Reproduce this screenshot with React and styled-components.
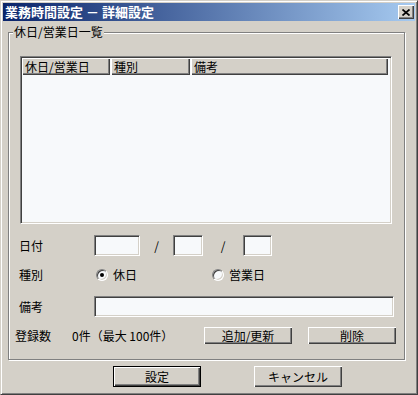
import styled, { createGlobalStyle } from "styled-components";

const GlobalStyle = createGlobalStyle`
  html, body {
    margin: 0;
    padding: 0;
    background: #d4d0c8;
  }
  body {
    font-family: "Noto Sans CJK JP", "Noto Sans", sans-serif;
    font-size: 12px;
    color: #000;
  }
`;

const raised = `
  box-shadow: inset 1px 1px #fff, inset -1px -1px #404040, inset -2px -2px #808080;
`;

const sunken = `
  border: 1px solid;
  border-color: #808080 #fff #fff #808080;
  box-shadow: inset 1px 1px #404040, inset -1px -1px #d4d0c8;
`;

const Window = styled.div`
  width: 418px;
  height: 395px;
  box-sizing: border-box;
  background: #d4d0c8;
  border: 1px solid;
  border-color: #d4d0c8 #404040 #404040 #d4d0c8;
  box-shadow: inset 1px 1px #fff, inset -1px -1px #808080;
  padding: 2px;
  display: flex;
  flex-direction: column;
`;

const TitleBar = styled.div`
  height: 18px;
  flex-shrink: 0;
  display: flex;
  align-items: center;
  justify-content: space-between;
  padding: 0 2px 0 2px;
  background: linear-gradient(to right, #0a246a, #a6caf0);
  color: #fff;
  font-weight: bold;
  font-size: 13px;
  line-height: 18px;
`;

const CloseButton = styled.div`
  width: 16px;
  height: 14px;
  background: #d4d0c8;
  ${raised}
  display: flex;
  align-items: center;
  justify-content: center;
  margin-right: -1px;
`;

const Group = styled.div`
  position: relative;
  margin: 11px 0 0 5px;
  width: 397px;
  height: 328px;
  box-sizing: border-box;
  border: 1px solid #808080;
  box-shadow: 1px 1px 0 #fff, inset 1px 1px 0 #fff;
  padding: 23px 0 0 11px;
`;

const Legend = styled.span`
  position: absolute;
  top: -8px;
  left: 4px;
  padding: 0 1px;
  background: #d4d0c8;
  line-height: 14px;
`;

const List = styled.div`
  width: 372px;
  height: 168px;
  box-sizing: border-box;
  ${sunken}
  background: #f7f9fb;
  padding: 1px;
`;

const Header = styled.div`
  display: flex;
  height: 17px;
`;

const HeaderCell = styled.div`
  width: ${(p) => (p.$w ? `${p.$w}px` : "auto")};
  flex: ${(p) => (p.$w ? "none" : 1)};
  box-sizing: border-box;
  background: #d4d0c8;
  ${raised}
  padding-left: 3px;
  line-height: 17px;
  white-space: nowrap;
  margin-right: ${(p) => (p.$w ? "1px" : "2px")};
`;

const Row = styled.div`
  display: flex;
  align-items: center;
  height: ${(p) => p.$h}px;
  margin-top: ${(p) => p.$mt}px;
  margin-left: ${(p) => p.$indent || -1}px;
`;

const Label = styled.span`
  width: ${(p) => p.$w || 75}px;
  flex-shrink: 0;
  line-height: 14px;
  white-space: nowrap;
`;

const TextBox = styled.div`
  width: ${(p) => p.$w}px;
  height: 21px;
  box-sizing: border-box;
  ${sunken}
  background: #f7f9fb;
  flex-shrink: 0;
`;

const Slash = styled.span`
  width: ${(p) => p.$w}px;
  text-align: center;
  flex-shrink: 0;
  padding-left: ${(p) => p.$pl || 0}px;
  box-sizing: border-box;
`;

const RadioOption = styled.label`
  display: flex;
  align-items: center;
  gap: 5px;
  width: ${(p) => p.$w}px;
  flex-shrink: 0;
  line-height: 14px;
`;

const RadioDot = styled.span`
  width: 12px;
  height: 12px;
  box-sizing: border-box;
  border-radius: 50%;
  border: 1px solid;
  border-color: #808080 #fff #fff #808080;
  box-shadow: inset 1px 1px #404040, inset -1px -1px #d4d0c8;
  background: #f7f9fb;
  display: flex;
  align-items: center;
  justify-content: center;
  &::after {
    content: "";
    width: 4px;
    height: 4px;
    border-radius: 50%;
    background: ${(p) => (p.$checked ? "#000" : "transparent")};
  }
`;

const Count = styled.span`
  width: ${(p) => p.$w}px;
  flex-shrink: 0;
  white-space: nowrap;
  line-height: 14px;
`;

const Button = styled.div`
  width: 88px;
  height: ${(p) => p.$h || 17}px;
  box-sizing: border-box;
  flex-shrink: 0;
  background: #d4d0c8;
  ${raised}
  display: flex;
  align-items: center;
  justify-content: center;
  line-height: 14px;
  margin-left: ${(p) => p.$ml || 0}px;
  ${(p) =>
    p.$default &&
    `
    border: 1px solid #000;
    box-shadow: inset 1px 1px #fff, inset -1px -1px #404040, inset -2px -2px #808080;
  `}
`;

const Footer = styled.div`
  display: flex;
  margin-top: 6px;
  padding-left: 110px;
  gap: 53px;
`;

const App = () => {
  return (
    <>
      <GlobalStyle />
      <Window>
        <TitleBar>
          <span>業務時間設定 － 詳細設定</span>
          <CloseButton>
            <svg width="8" height="7" viewBox="0 0 8 7">
              <path d="M0.5 0.5 L7.5 6.5 M7.5 0.5 L0.5 6.5" stroke="#000" strokeWidth="1.7" />
            </svg>
          </CloseButton>
        </TitleBar>

        <Group>
          <Legend>休日/営業日一覧</Legend>
          <List>
            <Header>
              <HeaderCell $w={88}>休日/営業日</HeaderCell>
              <HeaderCell $w={79}>種別</HeaderCell>
              <HeaderCell>備考</HeaderCell>
            </Header>
          </List>

          <Row $h={21} $mt={11}>
            <Label>日付</Label>
            <TextBox $w={46} />
            <Slash $w={33}>/</Slash>
            <TextBox $w={30} />
            <Slash $w={40}>/</Slash>
            <TextBox $w={29} />
          </Row>

          <Row $h={18} $mt={10}>
            <Label $w={77}>種別</Label>
            <RadioOption $w={116}>
              <RadioDot $checked />
              休日
            </RadioOption>
            <RadioOption $w={120}>
              <RadioDot />
              営業日
            </RadioOption>
          </Row>

          <Row $h={21} $mt={12}>
            <Label>備考</Label>
            <TextBox $w={300} />
          </Row>

          <Row $h={17} $mt={10} $indent={-5}>
            <Label $w={57}>登録数</Label>
            <Count $w={132}>0件（最大 100件）</Count>
            <Button>追加/更新</Button>
            <Button $ml={16}>削除</Button>
          </Row>
        </Group>

        <Footer>
          <Button $h={21} $default>
            設定
          </Button>
          <Button $h={21}>キャンセル</Button>
        </Footer>
      </Window>
    </>
  );
};

export default App;
